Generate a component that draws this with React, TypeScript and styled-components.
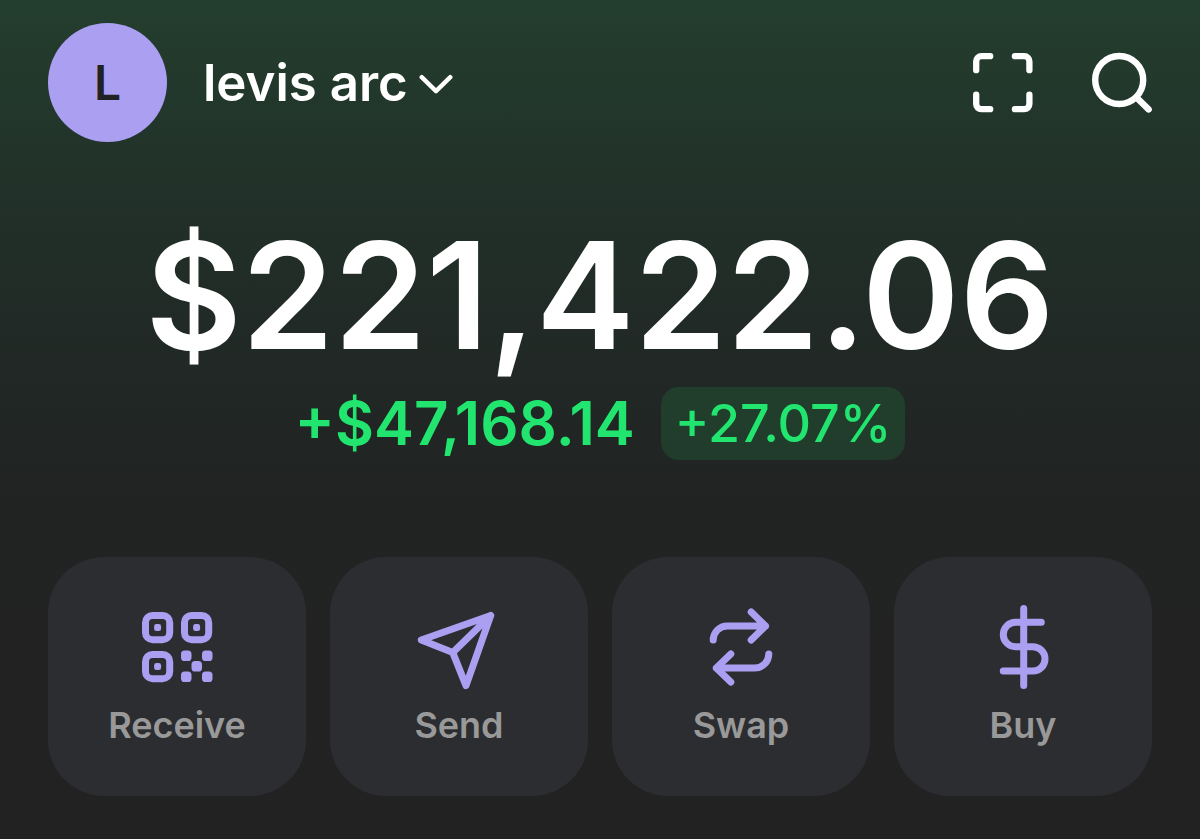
import React from "react";
import styled, { createGlobalStyle } from "styled-components";

const colors = {
  lilac: "#ab9ff2",
  ink: "#222222",
  card: "#2c2d31",
  muted: "#999999",
  gain: "#21e56f",
  white: "#ffffff",
};

const GlobalStyle = createGlobalStyle`
  *, *::before, *::after { box-sizing: border-box; }
  html { min-height: 100%; background: ${colors.ink}; }
  body { margin: 0; font-family: Inter, "Liberation Sans", sans-serif; }
  button { font: inherit; border: 0; padding: 0; background: none; color: inherit; cursor: pointer; }
  svg { display: block; flex: none; }
`;

const Screen = styled.main`
  min-height: 100vh;
  padding: 23px 48px 43px;
  color: ${colors.white};
  background: linear-gradient(
    180deg,
    #233e2e 0,
    #22332a 160px,
    #212a26 320px,
    #212423 480px,
    ${colors.ink} 640px
  );
`;

const Header = styled.header`
  display: flex;
  align-items: center;
  justify-content: space-between;
`;

const AccountButton = styled.button`
  display: flex;
  align-items: center;
`;

const Avatar = styled.span`
  display: grid;
  place-items: center;
  width: 119px;
  height: 119px;
  border-radius: 50%;
  background: ${colors.lilac};
  color: ${colors.ink};
  font-size: 48px;
  font-weight: 600;
`;

const AccountName = styled.span`
  margin: 0 11px 0 36px;
  font-size: 51px;
  font-weight: 600;
  line-height: 60px;
`;

const HeaderActions = styled.div`
  display: flex;
  gap: 58px;
`;

const Balance = styled.section`
  display: flex;
  flex-direction: column;
  align-items: center;
  margin-top: 62px;
`;

const Total = styled.h1`
  margin: 0;
  font-size: 148px;
  font-weight: 600;
  line-height: 183px;
  white-space: nowrap;
`;

const ChangeRow = styled.div`
  display: flex;
  align-items: center;
  gap: 26px;
  color: ${colors.gain};
`;

const ChangeAmount = styled.span`
  font-size: 60px;
  font-weight: 600;
  line-height: 73px;
`;

const ChangeBadge = styled.span`
  padding: 0 14px;
  border-radius: 18px;
  background: rgba(33, 229, 111, 0.12);
  font-size: 52px;
  font-weight: 500;
  line-height: 73px;
`;

const Actions = styled.nav`
  display: grid;
  grid-template-columns: repeat(4, 1fr);
  gap: 24px;
  margin-top: 97px;
`;

const ActionButton = styled.button`
  display: flex;
  flex-direction: column;
  align-items: center;
  && { padding: 46px 0 49px; }
  border-radius: 56px;
  background: ${colors.card};
`;

const ActionLabel = styled.span`
  margin-top: 12px;
  color: ${colors.muted};
  font-size: 36px;
  font-weight: 600;
  line-height: 44px;
`;

const ActionIcon = ({ children }: { children: React.ReactNode }) => (
  <svg
    width="88"
    height="88"
    viewBox="0 0 88 88"
    fill="none"
    stroke={colors.lilac}
    strokeWidth="7"
    strokeLinecap="round"
    strokeLinejoin="round"
    aria-hidden="true"
  >
    {children}
  </svg>
);

const finders = [[0, 0], [39, 0], [0, 39]];
const modules = [[39, 38.5], [60, 38.5], [49.5, 49], [39, 59.5], [60, 59.5]];

const ReceiveIcon = () => (
  <ActionIcon>
    <g transform="translate(9 9)">
      {finders.map(([x, y]) => (
        <g key={`${x}-${y}`}>
          <rect x={x + 3.5} y={y + 3.5} width="24.2" height="24.2" rx="7" />
          <rect x={x + 12.1} y={y + 12.1} width="7" height="7" rx="2.4" fill={colors.lilac} stroke="none" />
        </g>
      ))}
      {modules.map(([x, y]) => (
        <rect key={`${x}-${y}`} x={x} y={y} width="10.5" height="10.5" rx="3.6" fill={colors.lilac} stroke="none" />
      ))}
    </g>
  </ActionIcon>
);

const SendIcon = () => (
  <ActionIcon>
    <path d="M75.7 12.5 6.3 37 37.8 49.6 51 82.6ZM75.7 12.5 37.8 49.6" />
  </ActionIcon>
);

const SwapIcon = () => (
  <ActionIcon>
    <g transform="translate(12.5 5)">
      <path d="M3.7 32A14 14 0 0 1 17.7 18H56M41.7 4 56 18 41.7 32" />
      <path d="M59.3 46A14 14 0 0 1 45.3 60H6.8M21.3 46 6.8 60 21.3 74" />
    </g>
  </ActionIcon>
);

const BuyIcon = () => (
  <ActionIcon>
    <g transform="translate(20 1)">
      <path d="M24.7 4.5V81.5M42.3 18.3H16.5A12.2 12.2 0 0 0 16.5 42.7H33.8A12.2 12.2 0 0 1 33.8 67.1H4.3" />
    </g>
  </ActionIcon>
);

const ChevronIcon = () => (
  <svg width="34" height="22" viewBox="0 0 34 22" fill="none" stroke="currentColor" strokeWidth="4.4" strokeLinecap="round" strokeLinejoin="round" aria-hidden="true">
    <path d="M2.7 5.2 17 19.1 31.3 5.2" />
  </svg>
);

const ScanIcon = () => (
  <svg width="61" height="61" viewBox="0 0 61 61" fill="none" stroke="currentColor" strokeWidth="6.3" strokeLinecap="round" aria-hidden="true">
    <path d="M4.2 18.2V9.4A5.2 5.2 0 0 1 9.4 4.2H18.2M42.9 4.2H52.2A5.2 5.2 0 0 1 57.4 9.4V18.2M57.4 42.6V52A5.2 5.2 0 0 1 52.2 57.2H42.9M18.2 57.2H9.4A5.2 5.2 0 0 1 4.2 52V42.6" />
  </svg>
);

const SearchIcon = () => (
  <svg width="61" height="61" viewBox="0 0 61 61" fill="none" stroke="currentColor" strokeWidth="6.4" strokeLinecap="round" aria-hidden="true">
    <circle cx="28.2" cy="28" r="24" />
    <path d="M45.5 45.5 57.6 57.4" />
  </svg>
);

const actions = [
  { label: "Receive", Icon: ReceiveIcon },
  { label: "Send", Icon: SendIcon },
  { label: "Swap", Icon: SwapIcon },
  { label: "Buy", Icon: BuyIcon },
];

export default function App() {
  return (
    <>
      <GlobalStyle />
      <Screen>
        <Header>
          <AccountButton type="button">
            <Avatar>L</Avatar>
            <AccountName>levis arc</AccountName>
            <ChevronIcon />
          </AccountButton>
          <HeaderActions>
            <button type="button" aria-label="Scan">
              <ScanIcon />
            </button>
            <button type="button" aria-label="Search">
              <SearchIcon />
            </button>
          </HeaderActions>
        </Header>
        <Balance>
          <Total>$221,422.06</Total>
          <ChangeRow>
            <ChangeAmount>+$47,168.14</ChangeAmount>
            <ChangeBadge>+27.07%</ChangeBadge>
          </ChangeRow>
        </Balance>
        <Actions>
          {actions.map(({ label, Icon }) => (
            <ActionButton type="button" key={label}>
              <Icon />
              <ActionLabel>{label}</ActionLabel>
            </ActionButton>
          ))}
        </Actions>
      </Screen>
    </>
  );
}
